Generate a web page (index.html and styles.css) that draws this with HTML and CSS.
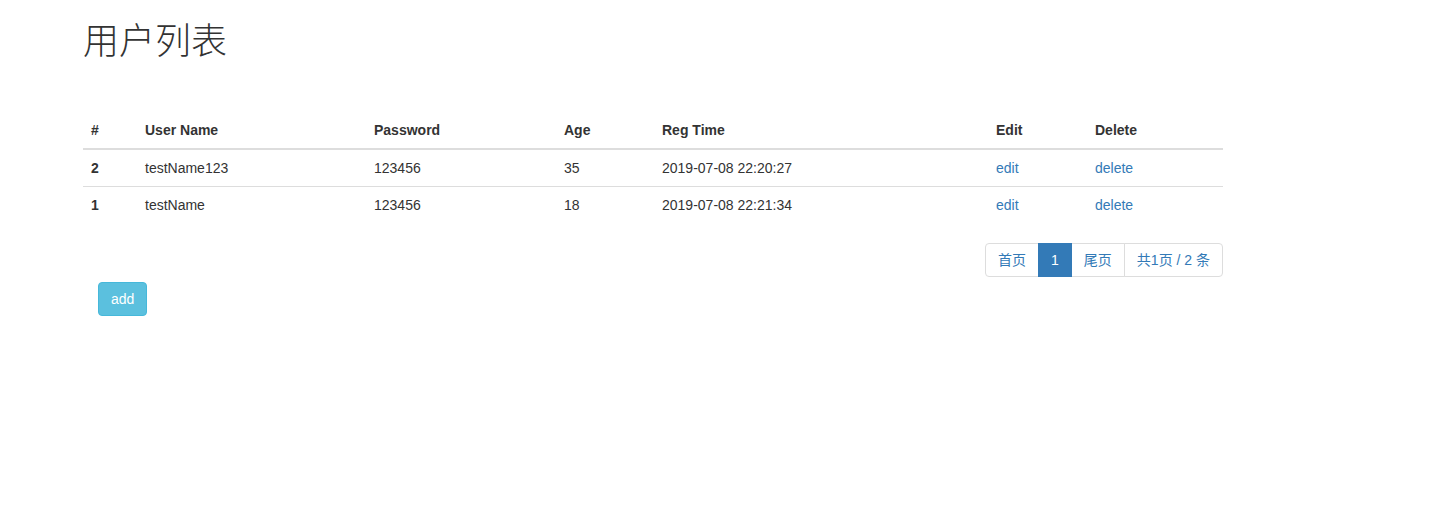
FILE: index.html
```html
<!DOCTYPE html>
<html lang="zh">
<head>
<meta charset="utf-8">
<title>用户列表</title>
<link rel="stylesheet" href="styles.css">
</head>
<body>
<div class="container">
  <h1 class="title">用户列表</h1>
  <table class="table">
    <colgroup>
      <col class="c-id"><col class="c-name"><col class="c-pass"><col class="c-age"><col class="c-time"><col class="c-edit"><col class="c-del">
    </colgroup>
    <thead>
      <tr><th>#</th><th>User Name</th><th>Password</th><th>Age</th><th>Reg Time</th><th>Edit</th><th>Delete</th></tr>
    </thead>
    <tbody>
      <tr><th>2</th><td>testName123</td><td>123456</td><td>35</td><td>2019-07-08 22:20:27</td><td><a href="#">edit</a></td><td><a href="#">delete</a></td></tr>
      <tr><th>1</th><td>testName</td><td>123456</td><td>18</td><td>2019-07-08 22:21:34</td><td><a href="#">edit</a></td><td><a href="#">delete</a></td></tr>
    </tbody>
  </table>
  <div class="pager-row">
    <ul class="pagination">
      <li><a href="#">首页</a></li>
      <li class="active"><a href="#">1</a></li>
      <li><a href="#">尾页</a></li>
      <li><a href="#">共1页 / 2 条</a></li>
    </ul>
  </div>
  <div class="actions">
    <button class="btn btn-info">add</button>
  </div>
</div>
</body>
</html>
```

FILE: styles.css
```css
* { box-sizing: border-box; }
html, body { margin: 0; padding: 0; background: #fff; }
body {
  font-family: "Liberation Sans", Arial, "Noto Sans CJK SC", sans-serif;
  font-size: 14px;
  line-height: 1.42857143;
  color: #333;
}
a { color: #337ab7; text-decoration: none; }

.container {
  width: 1170px;
  margin-left: 68px;
  padding: 0 15px;
}

.title {
  font-family: "Liberation Serif", "Noto Sans CJK SC", serif;
  font-weight: 300;
  font-size: 36px;
  line-height: 1.1;
  margin: 23px 0 0;
  color: #333;
}

.table {
  width: 1140px;
  border-collapse: collapse;
  border-spacing: 0;
  table-layout: fixed;
  margin-top: 49px;
  margin-bottom: 20px;
}
.c-id { width: 54px; }
.c-name { width: 229px; }
.c-pass { width: 190px; }
.c-age { width: 98px; }
.c-time { width: 334px; }
.c-edit { width: 99px; }
.c-del { width: 136px; }

.table th, .table td {
  padding: 8px;
  text-align: left;
  vertical-align: top;
  line-height: 1.42857143;
}
.table thead th {
  font-weight: bold;
  border-bottom: 2px solid #ddd;
  vertical-align: bottom;
}
.table tbody th, .table tbody td {
  border-top: 1px solid #ddd;
}
.table tbody th { font-weight: bold; }

.pager-row {
  display: flex;
  justify-content: flex-end;
}
.pagination {
  display: flex;
  list-style: none;
  margin: 0;
  padding: 0;
}
.pagination li a {
  display: block;
  padding: 6px 12px;
  line-height: 1.42857143;
  border: 1px solid #ddd;
  margin-left: -1px;
  color: #337ab7;
  background: #fff;
  font-family: "Liberation Sans", "Noto Sans CJK SC", sans-serif;
}
.pagination li:first-child a {
  margin-left: 0;
  border-radius: 4px 0 0 4px;
}
.pagination li:last-child a {
  border-radius: 0 4px 4px 0;
}
.pagination li.active a {
  background: #337ab7;
  border-color: #337ab7;
  color: #fff;
  position: relative;
  z-index: 2;
}

.actions {
  padding: 5px 15px 0;
}
.btn {
  display: inline-block;
  padding: 6px 12px;
  font-family: "Liberation Sans", Arial, sans-serif;
  font-size: 14px;
  line-height: 1.42857143;
  border: 1px solid transparent;
  border-radius: 4px;
  cursor: pointer;
}
.btn-info {
  color: #fff;
  background: #5bc0de;
  border-color: #46b8da;
}
```
